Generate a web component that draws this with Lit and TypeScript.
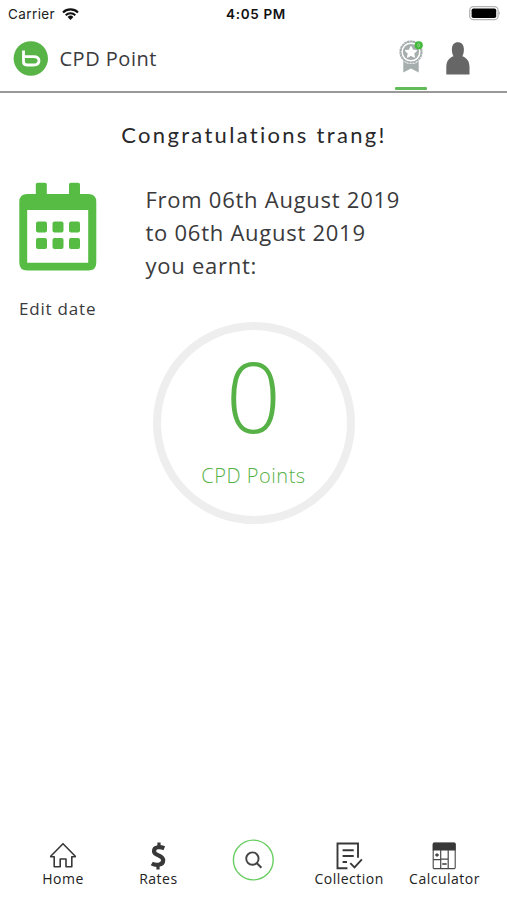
import { LitElement, html, css, svg } from "lit";
import { customElement } from "lit/decorators.js";

const wifi = html`<svg class="wifi" width="17" height="12" viewBox="0 0 17 12">
  <g fill="none" stroke="#111" stroke-width="2.1">
    <path d="M1 4.4a10.8 10.8 0 0 1 15 0" />
    <path d="M3.7 7.2a7 7 0 0 1 9.6 0" />
  </g>
  <path d="M5.6 9a4.2 4.2 0 0 1 5.8 0L8.5 11.9z" fill="#111" />
</svg>`;

const battery = html`<svg class="battery" width="32" height="15" viewBox="0 0 32 15">
  <rect x=".7" y=".7" width="28.4" height="13" rx="3.8" fill="#fff" stroke="#b4b4b4" stroke-width="1.3" />
  <rect x="2.6" y="2.4" width="24.6" height="9.6" rx="1.8" fill="#000" />
  <path d="M30.4 5q1.4 2.2 0 4.4z" fill="#888" />
</svg>`;

const logo = html`<svg class="logo" width="35" height="35" viewBox="0 0 35 35">
  <circle cx="17.8" cy="17.5" r="17.2" fill="#58b447" />
  <path d="M10.5 9.6V20.8Q10.5 24 14 24H20.5Q26 24 26 19.8Q26 15.600 20.5 15.600H10.800" fill="none" stroke="#fff" stroke-width="2.8" />
</svg>`;

const ribbon = html`<svg class="ribbon" width="24" height="34" viewBox="0 0 24 34">
  <path d="M4.3 20h15.4v12.4l-7.7-3.9-7.7 3.9z" fill="#a5adad" />
  <circle cx="12" cy="12" r="12" fill="#fff" />
  <circle cx="12" cy="12" r="10.8" fill="none" stroke="#a5adad" stroke-width="1.6" stroke-dasharray="2.4 .5" />
  <circle cx="12" cy="12" r="10.1" fill="none" stroke="#a5adad" stroke-width="1" />
  <circle cx="12" cy="12" r="8.1" fill="#a5adad" />
  <path d="M12 6.8l1.6 3.4 3.7.5-2.7 2.6.7 3.7-3.3-1.8-3.3 1.8.7-3.7-2.7-2.6 3.7-.5z" fill="#fff" stroke="#fff" stroke-linejoin="round" stroke-width="1.4" />
  <circle cx="19.7" cy="5.3" r="4.1" fill="#43b93b" />
  <ellipse cx="19.7" cy="5.3" rx="1.1" ry="1.7" fill="none" stroke="#a6dda0" stroke-width=".7" />
</svg>`;

const person = html`<svg class="person" width="24" height="33" viewBox="0 0 24 33">
  <path d="M.3 32.6V25c0-6 3-9.5 7.2-10.8C6.3 12.3 5.9 9.8 5.9 7.2 5.9 2.8 8.4.2 11.9.2s6 2.600 6 7c0 2.600-.4 5.100-1.600 7C20.500 15.500 23.500 19 23.500 25v7.600z" fill="#666" />
</svg>`;

const calendar = html`<svg class="calendar" width="78" height="89" viewBox="0 0 78 89">
  <g fill="#56bc44">
    <rect x="16.8" y=".8" width="11" height="17" rx="1.8" />
    <rect x="50" y=".8" width="11" height="17" rx="1.8" />
    <path fill-rule="evenodd" d="M8.3 11.9H69.3Q77.3 11.9 77.3 19.9V80.5Q77.3 88.5 69.3 88.5H8.3Q.3 88.5.3 80.5V19.9Q.3 11.9 8.3 11.9ZM8.2 28V80.8H69.2V28Z" />
    ${[0, 1].map((r) => [0, 1, 2].map((c) => svg`<rect x=${17 + c * 16.5} y=${39.4 + r * 16.5} width="11" height="11" rx="2" />`))}
  </g>
</svg>`;

const home = html`<svg width="28" height="28" viewBox="0 0 28 28">
  <path d="M1.7 14.2L14 1.7l12.3 12.5v.6H22.8V24.8H17V17H11.2V24.8H5.2V14.8H1.7z" fill="none" stroke="#383838" stroke-width="1.6" stroke-linejoin="round" />
</svg>`;

const dollar = html`<svg width="16" height="28" viewBox="0 0 16 28">
  <path d="M9 .6V5M8 22.500V27.400" stroke="#383838" stroke-width="3.2" />
  <path d="M14.300 6.200C11 4.900 4 4 4 9.200C4 14 13.200 12.700 13.200 18C13.200 24.200 4.800 23.300 1.800 21.500" fill="none" stroke="#383838" stroke-width="4.200" />
</svg>`;

const search = html`<svg class="search" width="42" height="42" viewBox="0 0 42 42">
  <circle cx="21.3" cy="21" r="19.9" fill="#fff" stroke="#69ce62" stroke-width="1.4" />
  <circle cx="20.4" cy="19.6" r="6.2" fill="none" stroke="#444" stroke-width="1.9" />
  <path d="M24.7 24l4.7 4.7" stroke="#444" stroke-width="2" />
</svg>`;

const collection = html`<svg width="28" height="28" viewBox="0 0 28 28">
  <g fill="none" stroke="#383838" stroke-width="1.9">
    <path d="M12.4 26.2H2.5V1.5H23V15.8" />
    <path d="M7.6 8.3H18.7M7.6 14H18.7M7.6 20H12" />
    <path d="M15.3 21.2l4.2 4.2 7.4-8" />
  </g>
</svg>`;

const calculator = html`<svg width="24" height="28" viewBox="0 0 24 28">
  <rect x="1.2" y="1.2" width="22" height="25.4" rx="1.2" fill="#fff" stroke="#484848" stroke-width="1.1" />
  <path d="M.8 8.6V2Q.8.6 2.2.6H22.2Q23.6.6 23.6 2V8.6z" fill="#383838" />
  <path d="M8.7 8v18.5M16.2 8v18.5M1.2 17.7h7.5M8.7 17.2h7.5" fill="none" stroke="#484848" stroke-width="1.2" />
  <path d="M3.2 13h3.6M5 11.2v3.6M10.2 22h4.5" stroke="#383838" stroke-width="1.3" />
</svg>`;

@customElement("app-root")
export class AppRoot extends LitElement {
  static styles = css`
    :host {
      display: flex;
      flex-direction: column;
      height: 900px;
      box-sizing: border-box;
      background: #fff;
      color: #3a3a3c;
      font-family: "Open Sans", sans-serif;
      overflow: hidden;
      white-space: nowrap;
    }
    svg { display: block; flex: none; }
    .status {
      display: grid;
      grid-template-columns: 1fr auto 1fr;
      align-items: center;
      height: 28px;
      padding: 0 6px 0 8px;
      font: 13.5px/28px Inter, sans-serif;
      color: #222;
    }
    .carrier { display: flex; align-items: center; gap: 7px; letter-spacing: 0.4px; }
    .wifi { margin-top: -1px; }
    .time { font-weight: 600; color: #111; letter-spacing: 0.65px; padding-left: 3px; }
    .battery { justify-self: end; margin-top: -1px; }
    .header {
      display: flex;
      box-sizing: border-box;
      height: 65px;
      border-bottom: 2px solid #999;
    }
    .logo { margin: 13px 0 0 13px; }
    .title { flex: 1; margin-left: 11.5px; font-size: 20px; line-height: 61px; letter-spacing: 0.5px; }
    .tab { display: flex; flex-direction: column; align-items: center; width: 32px; margin-right: 15px; }
    .tab.active { justify-content: space-between; }
    .tab.active::after { content: ""; width: 32px; height: 3px; background: #62bb59; border-radius: 1px; margin-bottom: 1px; }
    .tab:last-child { margin-right: 33px; }
    .ribbon { margin-top: 12px; }
    .person { margin-top: 14px; }
    h1 {
      margin: 25px 0 0;
      text-align: center;
      font: 400 22px/34px Lato, sans-serif;
      letter-spacing: 2.3px;
      text-indent: 1px;
      color: #28282a;
    }
    .period { display: flex; margin-top: 30px; padding-left: 19px; height: 140px; }
    .edit { width: 126.5px; }
    .edit p { margin: 26px 0 0; font-size: 17px; line-height: 24px; letter-spacing: 0.8px; }
    .range { margin: 1px 0 0; font-size: 22px; line-height: 33px; letter-spacing: 0.74px; }
    .ring {
      display: flex;
      flex-direction: column;
      align-items: center;
      align-self: center;
      box-sizing: border-box;
      width: 202px;
      height: 202px;
      border: 8.5px solid #eee;
      border-radius: 50%;
      font-weight: 300;
      color: #56b146;
    }
    .count { font-size: 97px; line-height: 100px; margin-top: 15px; }
    .unit { font-size: 20px; line-height: 28px; margin-top: 17px; letter-spacing: 0.52px; }
    nav {
      display: grid;
      grid-template-columns: repeat(5, 95.4px);
      justify-content: center;
      height: 62px;
      margin-top: auto;
    }
    .item { display: flex; flex-direction: column; align-items: center; font-size: 14px; line-height: 18px; letter-spacing: 0.5px; color: #222; }
    .item span { padding-left: 0.5px; }
    .icon { display: flex; align-items: center; justify-content: center; height: 28px; margin-top: 4px; }
    .item.find .icon { height: 42px; margin-top: 1px; }
  `;

  render() {
    return html`
      <div class="status">
        <div class="carrier"><span>Carrier</span>${wifi}</div>
        <div class="time">4:05 PM</div>
        ${battery}
      </div>
      <header class="header">
        ${logo}
        <div class="title">CPD Point</div>
        <div class="tab active">${ribbon}</div>
        <div class="tab">${person}</div>
      </header>
      <h1>Congratulations trang!</h1>
      <section class="period">
        <div class="edit">${calendar}<p>Edit date</p></div>
        <p class="range">From 06th August 2019<br />to 06th August 2019<br />you earnt:</p>
      </section>
      <section class="ring">
        <div class="count">0</div>
        <div class="unit">CPD Points</div>
      </section>
      <nav>
        <div class="item"><div class="icon">${home}</div><span>Home</span></div>
        <div class="item"><div class="icon">${dollar}</div><span>Rates</span></div>
        <div class="item find"><div class="icon">${search}</div></div>
        <div class="item"><div class="icon">${collection}</div><span>Collection</span></div>
        <div class="item"><div class="icon">${calculator}</div><span>Calculator</span></div>
      </nav>
    `;
  }
}
